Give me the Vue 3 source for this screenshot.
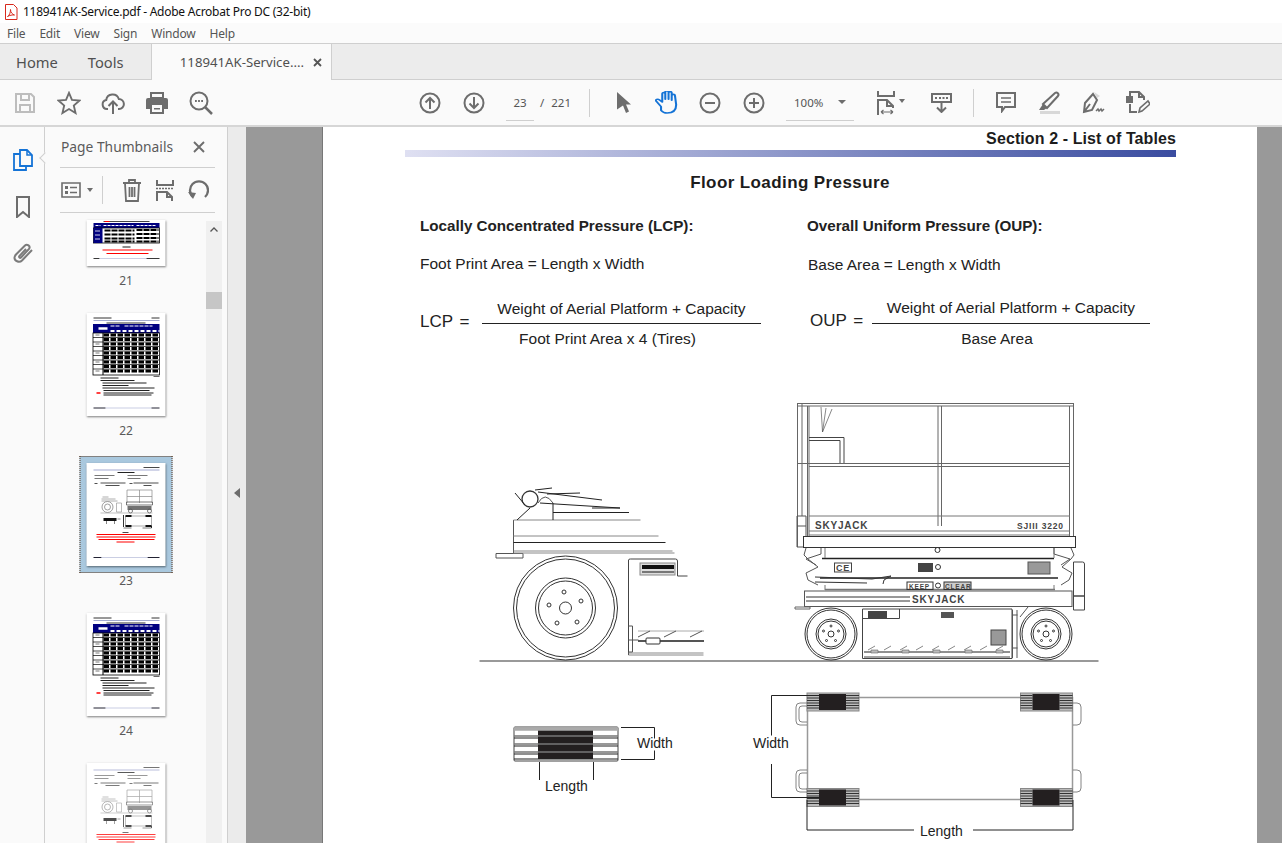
<template>
  <div class="app">
    <div class="titlebar">
      <svg class="pdf-icon" width="14" height="16" viewBox="0 0 14 16"><path d="M1.500 .5h8l3.500 3.500v11.500h-11.500z" fill="#fff" stroke="#d8281c"/><path d="M3.500 12.500c2-1 3-4 3-7 0 3 2 5 4 5.500-2-.3-5 .3-7 1.500z" fill="none" stroke="#d8281c"/></svg>
      <span>118941AK-Service.pdf - Adobe Acrobat Pro DC (32-bit)</span>
    </div>
    <div class="menubar">
      <span v-for="m in menus" :key="m">{{ m }}</span>
    </div>
    <div class="tabbar">
      <div class="tab-plain">Home</div>
      <div class="tab-plain tools">Tools</div>
      <div class="tab-doc">
        <span>118941AK-Service....</span>
        <svg width="9" height="9" viewBox="0 0 9 9"><path d="M1 1l7 7M8 1l-7 7" stroke="#555" stroke-width="1.800"/></svg>
      </div>
    </div>
    <div class="toolbar">
      <div class="tools-left">
        <svg width="24" height="24" viewBox="0 0 24 24"><path d="M3 3h15l3 3v15H3z" fill="none" stroke="#bdbdbd" stroke-width="2"/><path d="M8 3v6h8V3M7 21v-7h10v7" fill="none" stroke="#bdbdbd" stroke-width="2"/></svg>
        <svg width="24" height="24" viewBox="0 0 26 26"><path d="M13 2l3.200 7.600 8.300.7-6.300 5.400 1.900 8.100L13 19.500l-7.100 4.300 1.900-8.100L1.500 10.300l8.300-.7z" fill="none" stroke="#6d6d6d" stroke-width="2"/></svg>
        <svg width="24" height="24" viewBox="0 0 24 24"><path d="M7 18H6a4.500 4.500 0 0 1-.8-8.900A6.500 6.500 0 0 1 17.800 8 5 5 0 0 1 18 18h-1" fill="none" stroke="#6d6d6d" stroke-width="2"/><path d="M12 23V11M7.500 15l4.500-4.500 4.500 4.500" fill="none" stroke="#6d6d6d" stroke-width="2"/></svg>
        <svg width="24" height="24" viewBox="0 0 24 24"><path d="M6 2h12v5H6z" fill="none" stroke="#6d6d6d" stroke-width="2"/><path d="M3 7h18q2 0 2 2v9h-5v-4H6v4H1V9q0-2 2-2z" fill="#6d6d6d"/><path d="M6 13h12v9H6z" fill="#fafafa" stroke="#6d6d6d" stroke-width="2"/><path d="M9 17h6v1.500H9z" fill="#6d6d6d"/></svg>
        <svg width="24" height="24" viewBox="0 0 24 24"><circle cx="10" cy="10" r="8.500" fill="none" stroke="#6d6d6d" stroke-width="2"/><path d="M16 16l7 7" stroke="#6d6d6d" stroke-width="2.500"/><path d="M6 10h1.800M9.100 10h1.800M12.200 10H14" stroke="#6d6d6d" stroke-width="2"/></svg>
      </div>
      <div class="tools-mid">
        <svg width="22" height="22" viewBox="0 0 22 22" class="nav"><circle cx="11" cy="11" r="9.500" fill="none" stroke="#6d6d6d" stroke-width="2"/><path d="M11 17V6M6.500 10.500L11 6l4.500 4.500" fill="none" stroke="#6d6d6d" stroke-width="2"/></svg>
        <svg width="22" height="22" viewBox="0 0 22 22" class="nav"><circle cx="11" cy="11" r="9.500" fill="none" stroke="#6d6d6d" stroke-width="2"/><path d="M11 5v11M6.500 11.500L11 16l4.500-4.500" fill="none" stroke="#6d6d6d" stroke-width="2"/></svg>
        <span class="field page-field">23</span>
        <span class="slash">/</span>
        <span class="total">221</span>
        <span class="sep"></span>
        <svg width="14" height="21" viewBox="0 0 14 21" class="cursor"><path d="M0 0l14 12.500H9l3 7-3 1.500-3-7.500-6 4z" fill="#6d6d6d"/></svg>
        <svg width="23" height="23" viewBox="1 2 19 25" preserveAspectRatio="none" class="hand"><path d="M6 19l-4-6c-.8-1.600 1.200-2.800 2.500-1.500L7 14V5c0-1.800 2.500-1.800 2.500 0v6-8c0-1.800 2.700-1.800 2.700 0v8-7c0-1.800 2.600-1.800 2.600 0v8-5c0-1.800 2.700-1.800 2.700 0l1 10c0 6-3 9-7.500 9-2.500 0-3.800-1-5-3z" fill="none" stroke="#1473d6" stroke-width="1.700" stroke-linejoin="round"/></svg>
        <svg width="22" height="22" viewBox="0 0 22 22" class="zoom-out"><circle cx="11" cy="11" r="9.500" fill="none" stroke="#6d6d6d" stroke-width="2"/><path d="M6 11h10" stroke="#6d6d6d" stroke-width="2"/></svg>
        <svg width="22" height="22" viewBox="0 0 22 22" class="zoom-in"><circle cx="11" cy="11" r="9.500" fill="none" stroke="#6d6d6d" stroke-width="2"/><path d="M6 11h10M11 6v10" stroke="#6d6d6d" stroke-width="2"/></svg>
        <span class="field zoom-field">100%<i class="caret"></i></span>
        <svg width="18" height="24" viewBox="0 0 18 24" class="fit"><path d="M1 0v5h16V0" fill="none" stroke="#6d6d6d" stroke-width="2"/><path d="M1 24V9h9l6 6v2M10 9v6h6" fill="none" stroke="#6d6d6d" stroke-width="2"/><path d="M4 21h12M4 21l2.500-2M4 21l2.500 2M16 21l-2.500-2M16 21l-2.500 2" fill="none" stroke="#6d6d6d" stroke-width="1.200"/></svg>
        <i class="caret small"></i>
        <svg width="21" height="20" viewBox="0 0 21 20" class="rd"><path d="M1 1h19v8H1z" fill="#fafafa" stroke="#6d6d6d" stroke-width="2"/><path d="M4 5h2M8 5h2M11.500 5h2M15 5h2" stroke="#6d6d6d" stroke-width="2"/><path d="M10.500 9v10M6 14.500l4.500 4.500 4.500-4.500" fill="none" stroke="#6d6d6d" stroke-width="2"/></svg>
        <span class="sep second"></span>
        <svg width="20" height="21" viewBox="0 0 20 21" class="comment"><path d="M1 1h18v14H9l-3 4v-4H1z" fill="none" stroke="#6d6d6d" stroke-width="2"/><path d="M5 6h10M5 10h10" stroke="#6d6d6d" stroke-width="1.500"/></svg>
        <svg width="24" height="23" viewBox="0 0 24 23" class="high"><path d="M2 20h20v3H2z" fill="#d8d8d8"/><path d="M5 13L17 2c2-1.500 4.500 1 3 3L9 17z" fill="none" stroke="#6d6d6d" stroke-width="2"/><path d="M5 13l4 4-3 2H1z" fill="#6d6d6d"/></svg>
        <svg width="24" height="23" viewBox="0 0 24 23" class="sign"><path d="M12 1l6 4-3 2z" fill="#d8d8d8"/><path d="M11 3L3 12l-1 9 8-2 5-10zM2 21l6-8" fill="none" stroke="#6d6d6d" stroke-width="2"/><path d="M14 20l2-2 1 2 2-2 1 2 2-2" fill="none" stroke="#6d6d6d" stroke-width="1.500"/></svg>
        <svg width="24" height="24" viewBox="0 0 24 24" class="export"><path d="M4 6V1h9l5 5v3M13 1v5h5M4 13v8h7" fill="none" stroke="#6d6d6d" stroke-width="2"/><path d="M0 5h7v7H0z" fill="#6d6d6d"/><path d="M13 21l1-4 8-7 2 3-8 7z" fill="none" stroke="#6d6d6d" stroke-width="1.600"/></svg>
      </div>
    </div>

    <div class="body">
      <div class="rail">
        <svg width="20" height="22" viewBox="0 0 20 22"><path d="M7 1h7l5 5v11H7z" fill="#fafafa" stroke="#1473d6" stroke-width="1.800"/><path d="M7 5H1v16h12v-4" fill="none" stroke="#1473d6" stroke-width="1.800"/><path d="M14 1v5h5" fill="none" stroke="#1473d6" stroke-width="1.500"/></svg>
        <svg width="14" height="22" viewBox="0 0 14 22"><path d="M1 1h12v20l-6-5-6 5z" fill="none" stroke="#6d6d6d" stroke-width="2"/></svg>
        <svg width="21" height="21" viewBox="0 0 21 21"><path d="M19 7l-10 10.500c-2.800 2.800-7.800.3-7.500-3 .1-1 .6-2 1.500-3l9-9c2-2 6 .5 4 3.500L8 14.500c-1 1-2.600-.3-1.500-1.700L13 6" fill="none" stroke="#7b7b7b" stroke-width="2"/></svg>
        <span class="rail-notch"></span>
      </div>
      <div class="panel">
        <div class="panel-head">
          <span>Page Thumbnails</span>
          <svg width="12" height="12" viewBox="0 0 12 12"><path d="M1 1l10 10M11 1L1 11" stroke="#6d6d6d" stroke-width="1.900"/></svg>
        </div>
        <div class="panel-tools">
          <svg width="20" height="16" viewBox="0 0 20 16"><path d="M1 1h18v14H1z" fill="none" stroke="#6d6d6d" stroke-width="1.600"/><path d="M4 4h3v3H4zM4 9h3v3H4z" fill="#6d6d6d"/><path d="M9 5.500h7M9 10.500h7" stroke="#6d6d6d" stroke-width="1.500"/></svg>
          <i class="caret small"></i>
          <span class="panel-sep"></span>
          <svg width="20" height="23" viewBox="0 0 20 23"><path d="M1 4h18M7 4V1h6v3M3 4l1 18h12l1-18M7.500 8v10M10 8v10M12.500 8v10" fill="none" stroke="#6d6d6d" stroke-width="1.800"/></svg>
          <svg width="18" height="21" viewBox="0 0 18 21"><path d="M1 0v5h16V0M1 21v-9h10l5 5v4M11 12v5h5" fill="none" stroke="#6d6d6d" stroke-width="2"/><path d="M0 8.500h18" stroke="#6d6d6d" stroke-width="1.500" stroke-dasharray="2 1"/></svg>
          <svg width="21" height="21" viewBox="0 0 21 21"><path d="M5 17A9 9 0 1 1 17 17" fill="none" stroke="#6d6d6d" stroke-width="2.300"/><path d="M0 12l5 7 3-6z" fill="#6d6d6d"/></svg>
        </div>
        <div class="thumb-scroll">
          <div class="thumbs">
            <div v-for="t in thumbs" :key="t.num || 'next'" class="thumb" :class="{ current: t.current, faded: t.faded }">
              <div class="thumb-frame">
                <div class="thumb-page" :style="{ height: t.height + 'px' }">
                  <svg width="79" :height="t.height" :viewBox="'0 0 79 ' + t.height">
                    <use :href="'#' + t.kind" />
                  </svg>
                </div>
              </div>
              <div v-if="t.num" class="thumb-num">{{ t.num }}</div>
            </div>
          </div>
          <svg class="thumb-defs" width="0" height="0">
            <defs>
              <g id="t-table">
                <path d="M7 5h18M65 5h8" stroke="#333" stroke-width="1"/>
                <path d="M7 7.500h66" stroke="#6672b0" stroke-width=".6"/>
                <path d="M20 10h39" stroke="#333" stroke-width="1"/>
                <rect x="6.500" y="11" width="66.500" height="9" fill="#000080"/>
                <path d="M12 15.500h9" stroke="#fff" stroke-width="2.500"/>
                <path d="M24 13h10M38 13h28" stroke="#fff" stroke-width="1.200" stroke-dasharray="4 1"/>
                <path d="M24 18h49" stroke="#fff" stroke-width="2" stroke-dasharray="4 2"/>
                <rect x="6.500" y="20" width="66.500" height="42" fill="#fff" stroke="#000" stroke-width=".8"/>
                <path d="M6.500 24.500h66M6.500 29h66M6.500 33.500h66M6.500 38h66M6.500 42.500h66M6.500 47h66M6.500 51.500h66M6.500 56h66" stroke="#000" stroke-width=".7"/>
                <path d="M17 22h56M17 26.500h56M17 31h56M17 35.500h56M17 40h56M17 44.500h56M17 49h56M17 53.500h56M17 58h56" stroke="#000" stroke-width="3.200" stroke-dasharray="5.500 1.500"/>
                <path d="M9 22h4M9 31h4M9 40h4M9 49h4M9 58h4" stroke="#555" stroke-width=".8"/>
                <path d="M16.500 20v42" stroke="#000"/>
                <path d="M67 63.500h6" stroke="#444" stroke-width=".8"/>
                <path d="M14 65h18M14 67.500h34M16 70h44M16 72.500h26M16 75h52M17 77.500h46M17 80h50M17 82h48" stroke="#222" stroke-width="1"/>
                <path d="M10 80h4" stroke="#f00" stroke-width="1.500"/>
                <path d="M7 95h12" stroke="#223" stroke-width="1"/>
                <path d="M19 95h46" stroke="#a6acd0" stroke-width=".6"/>
                <path d="M65 95h8" stroke="#223" stroke-width="1"/>
              </g>
              <g id="t-diagram">
                <path d="M57 4.500h16" stroke="#333" stroke-width=".9"/>
                <path d="M7 7h66" stroke="#7d85bd" stroke-width=".7"/>
                <path d="M31 9.500h17" stroke="#222" stroke-width="1"/>
                <path d="M8 12.500h20M41 12.500h20M8 15.500h14M41 15.500h13" stroke="#555" stroke-width=".8"/>
                <path d="M8 20.500h3M14 20h25M43 20.500h3M47 20h25M19 22.500h14M57 22.500h8" stroke="#222" stroke-width=".8"/>
                <path d="M40.500 27h25v13M40.500 27v13M40.500 33.500h25M53 27v13" fill="none" stroke="#888" stroke-width=".7"/>
                <path d="M40 39h26v3H40z" fill="none" stroke="#555" stroke-width=".8"/>
                <path d="M41 44h24M41 46h24" stroke="#444" stroke-width="1.400"/>
                <circle cx="44" cy="48" r="2" fill="none" stroke="#555" stroke-width=".8"/>
                <circle cx="63" cy="48" r="2" fill="none" stroke="#555" stroke-width=".8"/>
                <circle cx="21" cy="44" r="5.500" fill="none" stroke="#777" stroke-width=".7"/>
                <circle cx="21" cy="44" r="3" fill="none" stroke="#777" stroke-width=".7"/>
                <path d="M15 36h14M15 38h16M16 34h6" stroke="#999" stroke-width=".8"/>
                <path d="M30 40h5v9h-5z" fill="none" stroke="#888" stroke-width=".6"/>
                <path d="M14 50h52" stroke="#999" stroke-width=".6"/>
                <path d="M17 56.500h13" stroke="#111" stroke-width="3"/>
                <path d="M20 58v3M28 58v3M31 56h3" stroke="#333" stroke-width=".6"/>
                <path d="M39 53h26v10H39z" fill="none" stroke="#777" stroke-width=".6"/>
                <path d="M39 53h6M59 53h6M39 63h6M59 63h6" stroke="#111" stroke-width="2"/>
                <path d="M37 52v12M65 63v2" stroke="#000" stroke-width=".8"/>
                <path d="M37 65h8M56 65h9" stroke="#222" stroke-width=".6"/>
                <path d="M36 69.500h6" stroke="#333" stroke-width=".9"/>
                <path d="M10 71.500h59M10 74h59M12 76.500h56M30 79h18" stroke="#f00" stroke-width="1"/>
                <path d="M7 94.500h8M61 94.500h12" stroke="#223" stroke-width="1"/>
                <path d="M15 94.500h46" stroke="#a6acd0" stroke-width=".6"/>
              </g>
              <g id="t-first">
                <path d="M17 1.500h46" stroke="#333" stroke-width=".9"/>
                <path d="M18 1.500h5" stroke="#f00" stroke-width="1"/>
                <rect x="7" y="3" width="66" height="5" fill="#000080"/>
                <path d="M9 5.500h5M17 5.500h30M50 5.500h20" stroke="#fff" stroke-width="1" stroke-dasharray="3 1"/>
                <rect x="7" y="8" width="66" height="15" fill="#fff" stroke="#000" stroke-width=".8"/>
                <rect x="7" y="8" width="9" height="15" fill="#000080"/>
                <path d="M8.500 11h5M8.500 15h5M8.500 19h5" stroke="#fff" stroke-width=".8"/>
                <path d="M18 10.500h30M18 14.500h30M18 18.500h30M18 21.500h30M50 10h22M50 14h22M50 18h22M50 21.500h22" stroke="#000" stroke-width="2" stroke-dasharray="6 1"/>
                <path d="M16 30h50M20 33.500h42" stroke="#f00" stroke-width="1"/>
                <path d="M36 27h8" stroke="#666" stroke-width="1.500"/>
                <path d="M7 38.500h6" stroke="#222" stroke-width=".9"/>
                <path d="M13 38.500h47" stroke="#a6acd0" stroke-width=".6"/>
                <path d="M60 38.500h13" stroke="#222" stroke-width=".9"/>
              </g>
            </defs>
          </svg>
          <div class="scrollbar">
            <svg width="8" height="5" viewBox="0 0 8 5"><path d="M.5 4.500L4 1l3.500 3.500" fill="none" stroke="#555" stroke-width="1.300"/></svg>
            <div class="scroll-thumb"></div>
          </div>
        </div>
      </div>
      <div class="collapse"><i></i></div>
      <div class="viewer">
        <div class="page">
          <div class="sec-title">Section 2 - List of Tables</div>
          <div class="sec-bar"></div>
          <h1>Floor Loading Pressure</h1>
          <div class="formulas">
            <div class="formula">
              <h2>Locally Concentrated Pressure (LCP):</h2>
              <p>Foot Print Area = Length x Width</p>
              <div class="frac-row">
                <span class="frac-name">LCP =</span>
                <div class="frac">
                  <div class="num">Weight of Aerial Platform + Capacity</div>
                  <div class="den">Foot Print Area x 4 (Tires)</div>
                </div>
              </div>
            </div>
            <div class="formula right">
              <h2>Overall Uniform Pressure (OUP):</h2>
              <p>Base Area = Length x Width</p>
              <div class="frac-row">
                <span class="frac-name">OUP =</span>
                <div class="frac">
                  <div class="num">Weight of Aerial Platform + Capacity</div>
                  <div class="den">Base Area</div>
                </div>
              </div>
            </div>
          </div>
          <svg class="drawing" width="935" height="490" viewBox="322 390 935 490">
            <g fill="none" stroke="#333" stroke-width="1">
              <!-- ground -->
              <path d="M479.500 661h619" stroke="#999" stroke-width="2"/>

              <!-- close-up of the wheel -->
              <circle cx="565.500" cy="608" r="52"/>
              <circle cx="565.500" cy="608" r="49"/>
              <circle cx="565.500" cy="608" r="30"/>
              <circle cx="565.500" cy="608" r="27"/>
              <circle cx="565.500" cy="608" r="6"/>
              <circle cx="564" cy="592" r="2"/>
              <circle cx="581" cy="601" r="2"/>
              <circle cx="549" cy="605" r="2"/>
              <circle cx="557" cy="623" r="2"/>
              <circle cx="577" cy="622" r="2"/>
              <path d="M496 553.500h27v4.500h-27zM513.500 553v-33" stroke="#555"/>
              <path d="M513.500 520h127M513.500 536h145M513.500 551h159M513.500 553h161" stroke="#888"/>
              <path d="M513.500 542.500h152" stroke="#222"/>
              <circle cx="530" cy="499" r="8" stroke-width="1.300"/>
              <path d="M515 493l10 12M538 492l64 8M547 494l33-1M540 503l80 5M535 490l17-2M517 520l13-12M553 520v-17M553 512.500h76M592 508h28" stroke="#222"/>
              <path d="M538 503q7-12 15 0" stroke="#555"/>

              <!-- chassis close-up -->
              <path d="M628.500 655v-95q0-1 2-1h45q2 0 2 2v15h10" stroke="#444"/>
              <rect x="640" y="563" width="35" height="12" fill="#ddd" stroke="#888"/>
              <path d="M642 567h32" stroke="#111" stroke-width="4"/>
              <path d="M642 572h32" stroke="#555" stroke-width="1.500"/>
              <path d="M638 631h66" stroke="#aaa"/>
              <path d="M638 641h66" stroke="#555" stroke-width="2"/>
              <path d="M628.500 653h75M628.500 655h75" stroke="#888"/>
              <path d="M628.500 626h4v26h-4M628.500 640h10" stroke="#555"/>
              <rect x="646" y="638" width="14" height="6" rx="1" fill="#fff"/>
              <path d="M638 637l12-6M664 637l12-6M690 637l12-6" stroke="#555"/>

              <!-- platform -->
              <path d="M797 403.500h277M797 406h277M797.500 403v144M802 403v113M807.500 406v130M809 406v130M1069.500 406v130M1073.500 403v133" stroke="#666"/>
              <path d="M938 406v120M941.500 406v120" stroke="#666"/>
              <path d="M797 463.500h273M809 466.500h261" stroke="#666"/>
              <path d="M809 437.500h35v25.500M809 440.500h31v22.500" stroke="#444"/>
              <path d="M821 407l1.500 25M826 408l-3.500 24M832 409l-9.500 23" stroke="#555" stroke-width=".7"/>
              <path d="M797 516h9v31h-9zM797 526h9" stroke="#555"/>
              <path d="M809 516h261M809 531h261M809 535h261" stroke="#777"/>
              <rect x="803.500" y="536.500" width="272" height="11" fill="#fff" stroke="#333"/>
              <text x="815" y="529" class="logo" font-size="10">SKYJACK</text>
              <text x="1017" y="528.500" class="model" font-size="8.500">SJIII 3220</text>

              <!-- scissors -->
              <path d="M806 548l-2 7 4 4 10 8-12 6 2 7 10 5M821 548v6l-15 5 10 6M1071 548l3 7-3 4-9 8 10 6-3 7-8 5M1054 548v6l16 5-9 6" stroke="#555"/>
              <path d="M822 558.500h232" stroke="#222" stroke-width="1.500"/>
              <path d="M825 548v10M1054 548v10M825 585v5M1054 585v5" stroke="#777"/>
              <path d="M820 578h238" stroke="#222" stroke-width="1.300"/>
              <path d="M815 577l57 2 19-3-7 4-1 4M815 582l52 1" stroke="#333"/>
              <path d="M825 589.500h230" stroke="#777" stroke-width="1.500"/>
              <circle cx="937.500" cy="550" r="2.500"/>
              <circle cx="938" cy="567" r="2.500"/>
              <circle cx="938" cy="585.500" r="2.500"/>
              <rect x="834.500" y="563" width="17" height="9" stroke="#444"/>
              <text x="836" y="571" class="logo" font-size="9">CE</text>
              <path d="M918 563h15v9h-15z" fill="#444" stroke="none"/>
              <rect x="1028" y="562" width="22" height="12" fill="#999" stroke="#555"/>
              <rect x="907" y="582" width="26" height="7.500"/>
              <text x="909" y="588.500" class="logo" font-size="6.500">KEEP</text>
              <rect x="944" y="582" width="27" height="7.500" fill="#ccc"/>
              <text x="945" y="588.500" class="logo" font-size="6.500">CLEAR</text>

              <!-- base -->
              <rect x="804.500" y="591" width="267.500" height="15.500" fill="#fff" stroke="#555"/>
              <path d="M806 597h104M806 601h104" stroke="#333"/>
              <text x="912" y="603" class="logo" font-size="10">SKYJACK</text>
              <path d="M1073.500 562h9q2 0 2 2v32h-11zM1073.500 596h11v14h-11z" stroke="#444"/>
              <path d="M795 607h15v2h-15z" stroke="#666"/>

              <!-- wheels -->
              <g v-for="w in machineWheels" :key="w">
                <circle :cx="w" cy="634" r="26"/>
                <circle :cx="w" cy="634" r="24"/>
                <circle :cx="w" cy="634" r="15"/>
                <circle :cx="w" cy="634" r="13"/>
                <circle :cx="w" cy="634" r="3"/>
                <circle :cx="w" cy="626" r="1"/>
                <circle :cx="w + 7.500" cy="631" r="1"/>
                <circle :cx="w - 7.500" cy="631" r="1"/>
                <circle :cx="w + 4.500" cy="640.500" r="1"/>
                <circle :cx="w - 4.500" cy="640.500" r="1"/>
              </g>

              <!-- chassis tray -->
              <path d="M862.500 658.500v-49.500h149.500v49.500zM862.500 618.500h37v-9.500" stroke="#444"/>
              <rect x="868" y="611" width="19" height="7" fill="#444" stroke="none"/>
              <rect x="941" y="612" width="13" height="6" fill="#555" stroke="none"/>
              <rect x="991" y="630" width="15" height="15" fill="#999" stroke="#444"/>
              <path d="M864 652h146" stroke="#222" stroke-width="1.200"/>
              <path d="M864 657h146" stroke="#444"/>
              <path d="M868 650l7-4M884 650l7-4M900 650l7-4M916 650l7-4M932 650l7-4M948 650l7-4M964 650l7-4M980 650l7-4M996 650l7-4" stroke="#555" stroke-width=".7"/>
              <path d="M871 650h7v3h-7zM902 650h7v3h-7zM933 650h7v3h-7zM965 650h7v3h-7zM996 650h7v3h-7z" fill="#bbb" stroke="#666" stroke-width=".6"/>
              <path d="M1012.500 610v48M1017 610v48M1012.500 615h5M1012.500 648h5M1020 617l8-10" stroke="#555"/>

              <!-- footprint of the tire -->
              <rect x="514" y="727" width="104" height="34" rx="1" fill="#fff" stroke="#444"/>
              <rect x="538" y="729" width="55" height="30" fill="#231f20" stroke="none"/>
              <path d="M514 729h104" stroke="#aaa" stroke-width="3.500"/>
              <path d="M514 736h104M514 744h104M514 752h104" stroke="#777" stroke-width="1.300"/>
              <path d="M514 738h24M593 738h25M514 746h24M593 746h25M514 754h24M593 754h25M514 759h104" stroke="#222" stroke-width="1.200"/>
              <path d="M621 727.500h33.500v11M621 759.500h33.500v-9M539.500 762v18M593.500 762v18" stroke="#222"/>

              <!-- footprint of the machine -->
              <rect x="807.500" y="697.500" width="265" height="102" stroke="#999" stroke-width="1.500"/>
              <g id="pad">
                <rect x="807" y="693" width="52" height="18" fill="#bbb" stroke="#888"/>
                <rect x="819" y="694" width="27" height="16" fill="#231f20" stroke="none"/>
                <path d="M807 695.500h12M807 698h12M807 700.500h12M807 703h12M807 705.500h12M807 708h12M846 695.500h13M846 698h13M846 700.500h13M846 703h13M846 705.500h13M846 708h13" stroke="#333"/>
              </g>
              <use href="#pad" x="213.500"/>
              <use href="#pad" y="95.500"/>
              <use href="#pad" x="213.500" y="95.500"/>
              <path d="M807 703h-7q-4 0-4 4v14q0 4 4 4h7M807 706h-5q-3 0-3 3v10q0 3 3 3h5" stroke="#666" stroke-width=".8"/>
              <path d="M807 770h-7q-4 0-4 4v14q0 4 4 4h7M807 773h-5q-3 0-3 3v10q0 3 3 3h5" stroke="#666" stroke-width=".8"/>
              <path d="M1073 703h4q4 0 4 4v14q0 4-4 4h-4" stroke="#666" stroke-width=".8"/>
              <path d="M1073 770h4q4 0 4 4v14q0 4-4 4h-4" stroke="#666" stroke-width=".8"/>
              <path d="M819 695.500h-47.500v40M771.500 764v33.500h47.500" stroke="#222"/>
              <path d="M807 800v30h107M973 830h100v-30" stroke="#222"/>
              <g class="dim">
                <text x="637" y="748">Width</text>
                <text x="545" y="791">Length</text>
                <text x="753" y="748">Width</text>
                <text x="920" y="836">Length</text>
              </g>
            </g>
          </svg>
        </div>
      </div>
    </div>
  </div>
</template>

<script setup>
const menus = ['File', 'Edit', 'View', 'Sign', 'Window', 'Help']

const machineWheels = [831, 1046]

const thumbs = [
  { num: 21, kind: 't-first', height: 46 },
  { num: 22, kind: 't-table', height: 103 },
  { num: 23, kind: 't-diagram', height: 103, current: true },
  { num: 24, kind: 't-table', height: 103 },
  { kind: 't-diagram', height: 103, faded: true }
]
</script>

<style>
html, body {
  margin: 0;
  overflow: hidden;
}
</style>

<style scoped>
.app {
  width: 1282px;
  height: 843px;
  display: flex;
  flex-direction: column;
  overflow: hidden;
  background: #fff;
  font-family: "Noto Sans", "Open Sans", sans-serif;
  color: #4b4b4b;
}

.titlebar {
  height: 23px;
  flex: none;
  display: flex;
  align-items: center;
  padding-left: 4px;
  gap: 5px;
  font-size: 12px;
  letter-spacing: -0.25px;
  color: #111;
}

.menubar {
  height: 20px;
  flex: none;
  display: flex;
  align-items: center;
  gap: 14px;
  padding-left: 7px;
  font-size: 12px;
  letter-spacing: -0.2px;
  color: #555;
  background: #fbfbfb;
}

.tabbar {
  height: 37px;
  flex: none;
  display: flex;
  background: #ececec;
  border-top: 1px solid #cfcfcf;
  border-bottom: 1px solid #cfcfcf;
  box-sizing: border-box;
}

.tab-plain {
  padding: 8px 0 0 16px;
  font-size: 14.700px;
  color: #505050;
}

.tab-plain.tools {
  padding-left: 30px;
  width: 63px;
}

.tab-doc {
  width: 181px;
  height: 36px;
  display: flex;
  align-items: center;
  gap: 9px;
  padding-left: 28px;
  box-sizing: border-box;
  background: #fafafa;
  border-left: 1px solid #cfcfcf;
  border-right: 1px solid #cfcfcf;
  font-size: 13.200px;
  color: #505050;
}

.toolbar {
  height: 47px;
  flex: none;
  display: flex;
  align-items: center;
  background: #fafafa;
  border-bottom: 2px solid #d6d6d6;
  box-sizing: border-box;
}

.tools-left {
  display: flex;
  align-items: center;
  width: 419px;
  padding-left: 13px;
  box-sizing: border-box;
  gap: 20px;
}

.tools-mid {
  display: flex;
  align-items: center;
  font-size: 11.500px;
  color: #555;
}

.tools-mid .nav + .nav {
  margin-left: 22px;
}

.field {
  height: 36px;
  box-sizing: border-box;
  border-bottom: 1px solid #cfcfcf;
  display: flex;
  align-items: center;
  justify-content: center;
}

.page-field {
  width: 28px;
  margin-left: 21px;
}

.slash {
  margin-left: 6px;
}

.total {
  margin-left: 7px;
}

.sep {
  width: 1px;
  height: 28px;
  background: #cfcfcf;
  margin-left: 18px;
}

.cursor {
  margin-left: 27px;
}

.hand {
  margin-left: 24px;
}

.zoom-out {
  margin-left: 21px;
}

.zoom-in {
  margin-left: 22px;
}

.zoom-field {
  width: 68px;
  margin-left: 21px;
  justify-content: flex-start;
  padding-left: 8px;
  gap: 15px;
}

.caret {
  display: inline-block;
  width: 0;
  height: 0;
  border-left: 4px solid transparent;
  border-right: 4px solid transparent;
  border-top: 4px solid #6d6d6d;
}

.caret.small {
  border-left-width: 3.500px;
  border-right-width: 3.500px;
}

.fit {
  margin-left: 23px;
}

.tools-mid .caret.small {
  margin-left: 4px;
  margin-bottom: 4px;
}

.rd {
  margin-left: 26px;
}

.sep.second {
  margin-left: 21px;
}

.comment {
  margin-left: 22px;
}

.high {
  margin-left: 22px;
}

.sign {
  margin-left: 20px;
}

.export {
  margin-left: 20px;
}

.body {
  flex: 1;
  min-height: 0;
  display: flex;
}

.rail {
  position: relative;
  width: 45px;
  flex: none;
  display: flex;
  flex-direction: column;
  align-items: center;
  padding: 22px 0 0 2px;
  gap: 25px;
  box-sizing: border-box;
  background: #fafafa;
  border-right: 1px solid #cfcfcf;
}

.rail-notch {
  position: absolute;
  top: 27px;
  right: -5px;
  width: 7px;
  height: 7px;
  background: #fafafa;
  border-left: 1px solid #cfcfcf;
  border-bottom: 1px solid #cfcfcf;
  transform: rotate(45deg);
}

.panel {
  width: 183px;
  flex: none;
  display: flex;
  flex-direction: column;
  background: #fafafa;
  border-right: 1px solid #cfcfcf;
  box-sizing: border-box;
}

.panel-head {
  height: 39px;
  margin: 0 12px 0 15px;
  padding: 0 10px 1px 1px;
  display: flex;
  align-items: center;
  justify-content: space-between;
  border-bottom: 1px solid #cfcfcf;
  font-size: 13.800px;
  color: #5a5a5a;
}

.panel-tools {
  height: 44px;
  margin: 0 12px 0 15px;
  display: flex;
  align-items: center;
  border-bottom: 1px solid #cfcfcf;
  padding-left: 1px;
}

.panel-tools .caret {
  margin-left: 6px;
}

.panel-sep {
  width: 1px;
  height: 28px;
  background: #cfcfcf;
  margin: 0 19px 0 9px;
}

.panel-tools svg:nth-of-type(3),
.panel-tools svg:nth-of-type(4) {
  margin-left: 14px;
}

.thumb-scroll {
  position: relative;
  flex: 1;
  min-height: 0;
  display: flex;
  overflow: hidden;
}

.thumbs {
  flex: 1;
  padding-top: 7px;
  display: flex;
  flex-direction: column;
  align-items: center;
  transform: translateX(0.500px);
}

.thumb {
  flex: none;
  margin-bottom: 17px;
  display: flex;
  flex-direction: column;
  align-items: center;
}

.thumb-frame {
  padding: 6px;
  border: 1px dotted transparent;
}

.thumb:first-child .thumb-frame {
  padding-top: 0;
  border-top: 0;
}

.thumb.current .thumb-frame {
  background: #a9c8de;
  border-color: #5a3a22;
}

.thumb.faded svg {
  opacity: 0.75;
}

.thumb-page {
  width: 79px;
  background: #fff;
  box-shadow: 0 1px 2px rgba(0, 0, 0, 0.5);
}

.thumb-page svg {
  display: block;
}

.thumb-num {
  font-size: 12px;
  color: #5a5a5a;
  height: 16px;
  line-height: 16px;
}

.thumb-defs {
  position: absolute;
}

.scrollbar {
  width: 16px;
  flex: none;
  margin: 8px 5px 0 0;
  background: #f0f0f0;
  display: flex;
  flex-direction: column;
  align-items: center;
  padding-top: 6px;
  box-sizing: border-box;
}

.scroll-thumb {
  width: 16px;
  height: 17px;
  margin-top: 60px;
  background: #c6c6c6;
}

.collapse {
  width: 18px;
  flex: none;
  display: flex;
  align-items: center;
  justify-content: center;
  padding-top: 16px;
  box-sizing: border-box;
  background: #ebebeb;
}

.collapse i {
  width: 0;
  height: 0;
  border-top: 5px solid transparent;
  border-bottom: 5px solid transparent;
  border-right: 6px solid #6d6d6d;
}

.viewer {
  flex: 1;
  min-width: 0;
  display: flex;
  overflow: hidden;
  padding-left: 76px;
  background: #999;
}

.page {
  width: 935px;
  flex: none;
  background: #fff;
  box-sizing: border-box;
  border-left: 1px solid #777;
  color: #222;
  font-family: "Liberation Sans", Arial, sans-serif;
}

.sec-title {
  padding: 3px 81px 0 0;
  height: 20px;
  box-sizing: border-box;
  line-height: 18px;
  text-align: right;
  font-size: 16px;
  font-weight: 700;
  letter-spacing: 0.1px;
  color: #1c1c1c;
}

.sec-bar {
  height: 7px;
  margin: 3px 81px 0 82px;
  background: linear-gradient(90deg, #dfe0f2, #3a4ca0);
}

h1 {
  margin: 16px 0 0;
  text-align: center;
  font-size: 17px;
  line-height: 20px;
  font-weight: 700;
  letter-spacing: 0.4px;
  color: #1c1c1c;
}

.formulas {
  display: grid;
  grid-template-columns: 387px 1fr;
  height: 197px;
  box-sizing: border-box;
  padding: 24px 0 0 97px;
}

h2 {
  margin: 0;
  font-size: 15.200px;
  line-height: 18px;
  font-weight: 700;
  color: #222;
}

.formula p {
  margin: 20px 0 0;
  font-size: 15.500px;
  line-height: 18px;
}

.formula.right p {
  margin: 21px 0 0 1px;
}

.frac-row {
  display: flex;
  align-items: center;
  margin-top: 26px;
  font-size: 15.500px;
}

.formula.right .frac-row {
  margin-top: 24px;
}

.frac-name {
  width: 62px;
  margin-bottom: 4px;
  font-size: 17px;
  word-spacing: 2px;
  white-space: nowrap;
}

.formula.right .frac-name {
  margin-left: 3px;
}

.frac {
  width: 279px;
  text-align: center;
}

.formula.right .frac {
  width: 278px;
}

.num {
  height: 24px;
  line-height: 20px;
  border-bottom: 1px solid #222;
}

.formula.right .num {
  height: 25px;
}

.den {
  padding: 6px 28px 0 0;
  line-height: 18px;
}

.drawing {
  display: block;
  margin-left: -1px;
}

.drawing text {
  stroke: none;
  fill: #222;
  font-family: "Liberation Sans", Arial, sans-serif;
}

.drawing .logo,
.drawing .model {
  font-weight: 700;
  letter-spacing: 0.8px;
  fill: #444;
}

.dim text {
  font-size: 14px;
}
</style>
